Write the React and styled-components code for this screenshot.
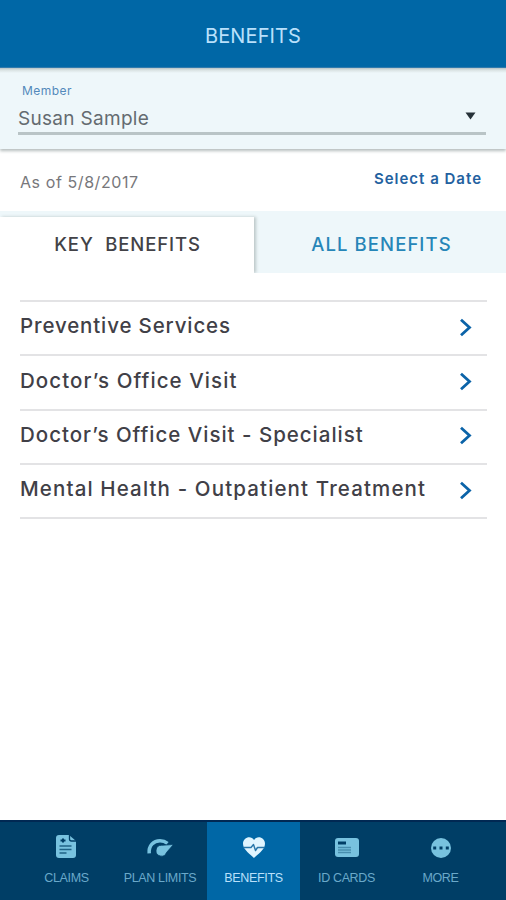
import React from "react";
import styled, { createGlobalStyle } from "styled-components";

const GlobalStyle = createGlobalStyle`
  * { box-sizing: border-box; }
  body { margin: 0; background: #fff; }
  button { border: 0; background: none; padding: 0; font: inherit; cursor: pointer; }
`;

const Screen = styled.div`
  width: 506px;
  height: 900px;
  display: flex;
  flex-direction: column;
  overflow: hidden;
  background: #fff;
  font-family: Inter, "Liberation Sans", sans-serif;
`;

const Header = styled.header`
  height: 68px;
  flex: none;
  display: flex;
  justify-content: center;
  padding-top: 24px;
  background: #0067a6;
  border-bottom: 1px solid #2a76ac;
`;

const Label = styled.span`
  display: block;
  white-space: pre;
  font-size: ${(p) => p.$size}px;
  line-height: ${(p) => p.$line || 24}px;
  font-weight: ${(p) => p.$weight || 400};
  letter-spacing: ${(p) => p.$track || 0}px;
  color: ${(p) => p.$color};
`;

const MemberPanel = styled.section`
  height: 81px;
  flex: none;
  padding: 15px 20px 0 18px;
  background: linear-gradient(#b5c3c5, #d9e2e2 2px, #eef7fa 5px);
  box-shadow: 0 2px 3px #b5bdbd;
`;

const MemberCaption = styled.div`
  padding-left: 4px;
`;

const MemberSelect = styled.button`
  width: 100%;
  height: 26px;
  margin-top: 7px;
  padding-right: 10px;
  display: flex;
  justify-content: space-between;
  align-items: flex-start;
`;

const SelectValue = styled.span`
  margin-top: 1px;
`;

const SelectLine = styled.div`
  height: 3px;
  background: #b9c4c6;
`;

const Caret = styled.svg`
  width: 11px;
  height: 8px;
  margin-top: 6px;
`;

const DateBar = styled.section`
  height: 62px;
  flex: none;
  display: flex;
  justify-content: space-between;
  padding: 17px 24px 0 20px;
`;

const AsOf = styled.div`
  padding-top: 4px;
`;

const Tabs = styled.div`
  height: 62px;
  flex: none;
  display: flex;
  align-items: flex-end;
  background: #eef7fa;
`;

const Tab = styled.button`
  width: ${(p) => (p.$active ? 254 : 252)}px;
  height: ${(p) => (p.$active ? 56 : 62)}px;
  display: flex;
  justify-content: center;
  padding-top: ${(p) => (p.$active ? 15 : 21)}px;
  padding-left: ${(p) => (p.$active ? 1 : 3)}px;
  background: ${(p) => (p.$active ? "#fff" : "transparent")};
  box-shadow: ${(p) => (p.$active ? "2px 0 3px #bcc7c8" : "none")};
  clip-path: ${(p) => (p.$active ? "inset(-3px -5px 0 0)" : "none")};
`;

const List = styled.ul`
  list-style: none;
  margin: 27px 19px 0 20px;
  padding: 0;
  border-top: 2px solid #e3e3e5;
  flex: 1;
`;

const Row = styled.li`
  height: 54.35px;
  display: flex;
  justify-content: space-between;
  align-items: center;
  padding: 0 15px 4px 0;
  border-bottom: 2px solid #e3e3e5;
`;

const Chevron = styled.svg`
  width: 13px;
  height: 19px;
  margin-top: 2px;
`;

const Nav = styled.nav`
  height: 80px;
  flex: none;
  display: grid;
  grid-template-columns: 20px 93px 94px 93px 93px 95px 18px;
  background: #003e66;
  border-top: 2px solid #002853;
`;

const NavItem = styled.button`
  display: flex;
  flex-direction: column;
  align-items: center;
  padding-top: 11px;
  gap: 8px;
  background: ${(p) => (p.$active ? "#0067a6" : "transparent")};
  font-family: "Liberation Sans", Arial, sans-serif;
`;

const NavIcon = styled.svg`
  width: 28px;
  height: 28px;
  flex: none;
  margin-right: 2px;
`;

const icons = {
  claims: (
    <>
      <path d="M7 2h10l7 6v14a3 3 0 0 1-3 3H7a3 3 0 0 1-3-3V5a3 3 0 0 1 3-3z" fill="#78c2df" />
      <path d="M17.5 2v4a2 2 0 0 0 2 2h4.500" fill="none" stroke="#003e66" strokeWidth="1.3" />
      <path d="M8.500 7.500h5M11 5.500v4" fill="none" stroke="#003e66" strokeWidth="2" />
      <path d="M7.500 13h12M7.500 16.500h12M7.500 20h7" fill="none" stroke="#1f6386" strokeWidth="1.500" />
    </>
  ),
  limits: (
    <>
      <path d="M4.200 20.300C3.500 12.500 8.500 7.800 15 7.800c3 0 5.500 1 7.500 2.600" fill="none" stroke="#78c2df" strokeWidth="3.600" />
      <path d="M28.500 11.500 16.500 12.300a5.400 5.400 0 1 0 5 7.200z" fill="#78c2df" stroke="#003e66" strokeWidth=".8" />
    </>
  ),
  benefits: (
    <>
      <path d="M15 25C12 21.500 4 17 4 10.700c0-6.500 8-9 11-3.700 3-5.300 11-2.800 11 3.700C26 17 18 21.500 15 25z" fill="#dff5ff" />
      <path d="M4.500 14.500H12l2.500-3 2 6 2-3H25.500" fill="none" stroke="#2877aa" strokeWidth="1.400" strokeLinejoin="round" />
    </>
  ),
  cards: (
    <>
      <rect x="3" y="5" width="24" height="19" rx="3" fill="#78c2df" />
      <path d="M6 10h8" stroke="#003e66" strokeWidth="3" />
      <path d="M6 14.500h13M6 17h13M6 19.500h13" stroke="#478eaf" strokeWidth="1.300" />
    </>
  ),
  more: (
    <>
      <circle cx="15" cy="15" r="10" fill="#78c2df" />
      <path d="M7.200 13.400h3v3h-3zM13.500 13.400h3v3h-3zM19.800 13.400h3v3h-3z" fill="#003e66" />
    </>
  ),
};

const benefits = [
  { name: "Preventive Services", track: 0.86 },
  { name: "Doctor’s Office Visit", track: 1.07 },
  { name: "Doctor’s Office Visit - Specialist", track: 0.98 },
  { name: "Mental Health - Outpatient Treatment", track: 1.13 },
];

const navItems = [
  { icon: "claims", label: "CLAIMS" },
  { icon: "limits", label: "PLAN LIMITS" },
  { icon: "benefits", label: "BENEFITS", active: true },
  { icon: "cards", label: "ID CARDS" },
  { icon: "more", label: "MORE" },
];

export default function App() {
  return (
    <Screen>
      <GlobalStyle />
      <Header>
        <Label $size={20} $track={0.1} $color="#b9e0fb">BENEFITS</Label>
      </Header>
      <MemberPanel>
        <MemberCaption>
          <Label $size={12} $line={16} $track={0.45} $color="#5389bb">Member</Label>
        </MemberCaption>
        <MemberSelect>
          <SelectValue>
            <Label $size={19} $track={0.3} $color="#646b70">Susan Sample</Label>
          </SelectValue>
          <Caret viewBox="0 0 11 8"><path d="M.5.5h10L5.5 7.5z" fill="#263238" /></Caret>
        </MemberSelect>
        <SelectLine />
      </MemberPanel>
      <DateBar>
        <AsOf>
          <Label $size={16} $track={0.58} $color="#77777b">As of 5/8/2017</Label>
        </AsOf>
        <Label $size={15} $line={25} $weight={600} $track={1} $color="#23619f">Select a Date</Label>
      </DateBar>
      <Tabs>
        <Tab $active>
          <Label $size={18.5} $weight={500} $track={0.88} $color="#424247">KEY  BENEFITS</Label>
        </Tab>
        <Tab>
          <Label $size={18.5} $weight={500} $track={1.08} $color="#2686b8">ALL BENEFITS</Label>
        </Tab>
      </Tabs>
      <List>
        {benefits.map((b) => (
          <Row key={b.name}>
            <Label $size={20.5} $weight={500} $track={b.track} $color="#414047">{b.name}</Label>
            <Chevron viewBox="0 0 13 19">
              <path d="M2 1.8 10.5 9.5 2 17.2" fill="none" stroke="#0b63a8" strokeWidth="2.8" />
            </Chevron>
          </Row>
        ))}
      </List>
      <Nav>
        <span />
        {navItems.map((n) => (
          <NavItem key={n.label} $active={n.active}>
            <NavIcon viewBox="0 0 28 28">{icons[n.icon]}</NavIcon>
            <Label $size={12.5} $line={18} $track={-0.35} $color={n.active ? "#b9e0fb" : "#6aa9ca"}>
              {n.label}
            </Label>
          </NavItem>
        ))}
        <span />
      </Nav>
    </Screen>
  );
}
